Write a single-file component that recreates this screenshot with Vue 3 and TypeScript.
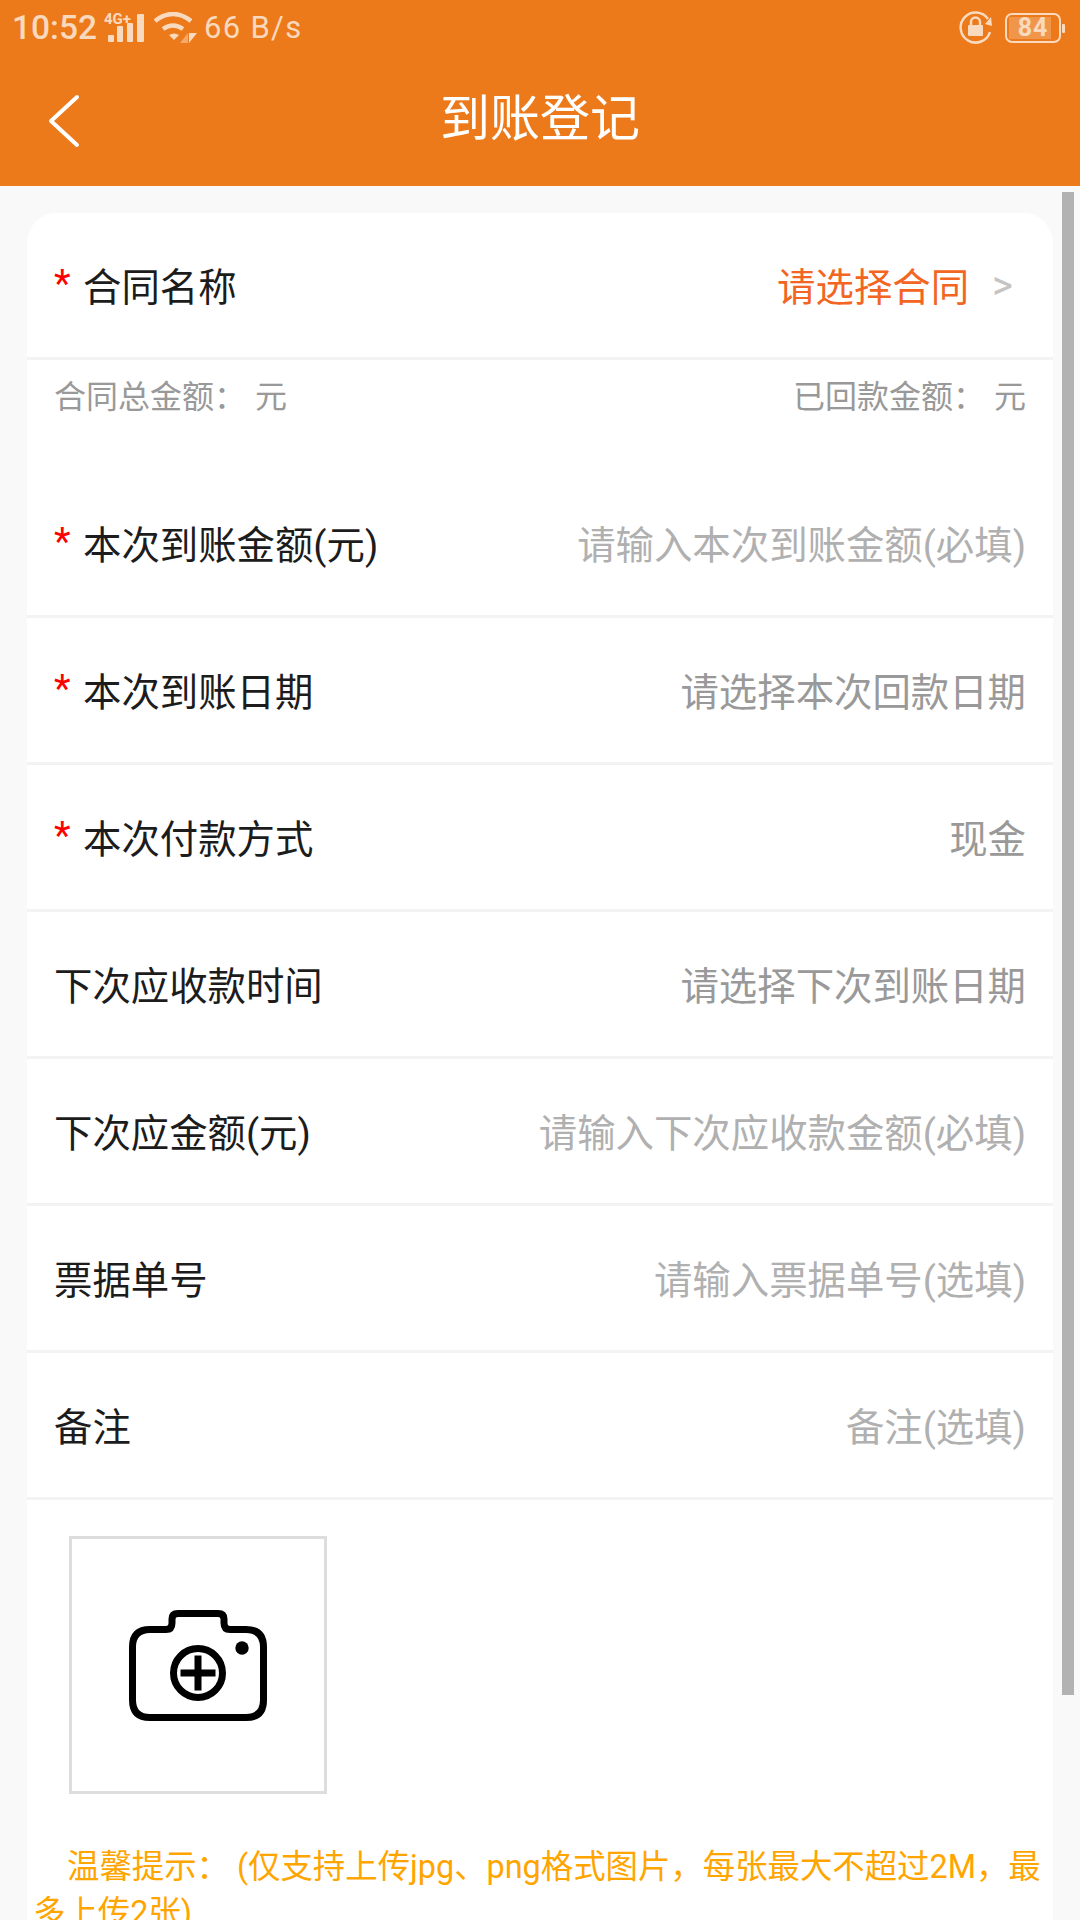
<script setup lang="ts">
interface Row { label: string; value: string; required?: boolean; kind?: string }
const rows: Row[] = [
  { label: '本次到账金额(元)', value: '请输入本次到账金额(必填)', required: true, kind: 'light' },
  { label: '本次到账日期', value: '请选择本次回款日期', required: true },
  { label: '本次付款方式', value: '现金', required: true },
  { label: '下次应收款时间', value: '请选择下次到账日期' },
  { label: '下次应金额(元)', value: '请输入下次应收款金额(必填)', kind: 'light' },
  { label: '票据单号', value: '请输入票据单号(选填)', kind: 'light' },
  { label: '备注', value: '备注(选填)', kind: 'light' }
]
</script>

<template>
  <div class="page">
    <header class="top">
      <div class="status">
        <div class="status-left">
          <span class="time">10:52</span>
          <svg class="signal" width="41" height="31" viewBox="0 0 41 31">
            <text x="0" y="11" class="net">4G+</text>
            <rect x="4" y="22" width="6" height="7" rx="1" fill="#fff" />
            <rect x="13" y="13" width="6" height="16" rx="1" fill="#fff" />
            <rect x="23" y="10" width="6" height="19" rx="1" fill="#fff" />
            <rect x="33" y="1" width="7" height="28" rx="1" fill="#fff" />
          </svg>
          <svg class="wifi" width="44" height="32" viewBox="0 0 44 32">
            <path d="M1 9Q19 -5 37 9" fill="none" stroke="#fff" stroke-width="4.500" />
            <path d="M9 17Q19 10 29 17" fill="none" stroke="#fff" stroke-width="4.500" />
            <path d="M15 23Q20 20 25 23L20 28Z" fill="#fff" />
            <path d="M26 31L34 21V31Z" fill="#fff" opacity="0.5" />
            <path d="M35 21H43L35 31Z" fill="#fff" />
          </svg>
          <span class="speed">66 B/s</span>
        </div>
        <div class="status-right">
          <svg width="34" height="34" viewBox="0 0 34 34">
            <path d="M29 8A15 15 0 1 0 31 21" fill="none" stroke="#fff" stroke-width="2.500" />
            <path d="M26 13L32 6L33 15Z" fill="#fff" />
            <rect x="9" y="14" width="15" height="11" rx="1" fill="#fff" />
            <path d="M12 14V11A4.500 4.500 0 0 1 21 11V14" fill="none" stroke="#fff" stroke-width="2.500" />
          </svg>
          <div class="battery">
            <span class="battery-fill"></span>
            <span class="battery-num">84</span>
          </div>
          <span class="battery-tip"></span>
        </div>
      </div>
      <div class="nav">
        <svg class="back" width="32" height="56" viewBox="0 0 32 56">
          <path d="M29 4L3 28L29 52" fill="none" stroke="#fff" stroke-width="4" stroke-linecap="round" stroke-linejoin="round" />
        </svg>
        <h1 class="title">到账登记</h1>
      </div>
    </header>

    <main class="card">
      <div class="row">
        <div class="label"><span class="star">*</span>合同名称</div>
        <div class="pick">
          <span class="pick-text">请选择合同</span>
          <span class="chev">&gt;</span>
        </div>
      </div>
      <div class="summary">
        <span>合同总金额： 元</span>
        <span>已回款金额： 元</span>
      </div>
      <div v-for="r in rows" :key="r.label" class="row">
        <div class="label"><span v-if="r.required" class="star">*</span>{{ r.label }}</div>
        <div class="value" :class="{ light: r.kind === 'light' }">{{ r.value }}</div>
      </div>
      <div class="upload">
        <svg width="138" height="111" viewBox="0 0 138 111">
          <path d="M3.500 37Q3.500 19.500 21 19.500H37Q43 19.500 43 13V9Q43 3.500 49 3.500H89Q95 3.500 95 9V13Q95 19.500 101 19.500H117Q134.500 19.500 134.500 37V90Q134.500 107.500 117 107.500H21Q3.500 107.500 3.500 90Z" fill="none" stroke="#000" stroke-width="7" stroke-linejoin="round" />
          <circle cx="69" cy="63" r="24.500" fill="none" stroke="#000" stroke-width="7" />
          <path d="M69 45.500V80.500M51.500 63H86.500" stroke="#000" stroke-width="7" />
          <circle cx="113" cy="38" r="6.700" fill="#000" />
        </svg>
      </div>
      <p class="tip">温馨提示： (仅支持上传jpg、png格式图片，每张最大不超过2M，最多上传2张)</p>
    </main>
    <div class="scrollbar"></div>
  </div>
</template>

<style scoped>
.page {
  position: relative;
  width: 1080px;
  height: 1920px;
  overflow: hidden;
  background: #f9f9f9;
  font-family: Roboto, "Noto Sans CJK SC", sans-serif;
}
.top {
  height: 186px;
  background: #ec7a1a;
  color: #fff;
}
.status {
  height: 56px;
  display: flex;
  justify-content: space-between;
  align-items: center;
  padding: 0 15px 0 12px;
}
.status-left {
  display: flex;
  align-items: center;
  color: rgba(255, 255, 255, 0.72);
}
.time {
  font-size: 33.500px;
  font-weight: 500;
  line-height: 56px;
}
.signal {
  margin-left: 7px;
  opacity: 0.72;
  overflow: visible;
}
.net {
  font-size: 15px;
  font-weight: 700;
  fill: #fff;
  font-family: Roboto, sans-serif;
}
.wifi {
  margin-left: 9px;
  opacity: 0.72;
}
.speed {
  margin-left: 6px;
  font-size: 31px;
  letter-spacing: 1.300px;
  line-height: 56px;
}
.status-right {
  display: flex;
  align-items: center;
  opacity: 0.72;
}
.battery {
  position: relative;
  width: 56px;
  height: 30px;
  margin-left: 12px;
  border: 2px solid #fff;
  border-radius: 7px;
  box-sizing: border-box;
  display: flex;
  align-items: center;
  justify-content: center;
}
.battery-fill {
  position: absolute;
  left: 2px;
  top: 2px;
  bottom: 2px;
  width: 42px;
  background: rgba(255, 255, 255, 0.3);
}
.battery-num {
  position: relative;
  font-size: 25px;
  font-weight: 700;
  line-height: 26px;
  letter-spacing: 1px;
}
.battery-tip {
  width: 3px;
  height: 9px;
  margin-left: 1px;
  background: #fff;
  border-radius: 1px;
}
.nav {
  position: relative;
  height: 130px;
  display: flex;
  align-items: center;
  justify-content: center;
}
.back {
  position: absolute;
  left: 48px;
  top: 37px;
}
.title {
  margin: 0 0 14px;
  font-size: 50px;
  font-weight: 400;
}
.card {
  position: relative;
  width: 1026px;
  margin: 27px 0 0 27px;
  background: #fff;
  border-radius: 30px 30px 0 0;
}
.row {
  height: 147px;
  box-sizing: border-box;
  padding: 0 27px 3px;
  border-bottom: 3px solid #f3f3f3;
  display: flex;
  align-items: center;
  justify-content: space-between;
  font-size: 38.400px;
}
.label {
  color: #1c1c1c;
  display: flex;
  align-items: center;
  white-space: nowrap;
}
.star {
  width: 29px;
  color: #f00;
}
.value {
  color: #999;
  white-space: nowrap;
}
.value.light {
  color: #b0b0b0;
}
.pick {
  display: flex;
  align-items: center;
}
.pick-text {
  color: #f26522;
}
.chev {
  margin-left: 23px;
  margin-right: 13px;
  padding-top: 4px;
  color: #c4c4c4;
  font-size: 40px;
}
.summary {
  height: 111px;
  box-sizing: border-box;
  padding: 14px 27px 0;
  display: flex;
  justify-content: space-between;
  font-size: 32px;
  line-height: 46px;
  word-spacing: 1px;
  color: #999;
}
.upload {
  width: 258px;
  height: 258px;
  box-sizing: border-box;
  margin: 36px 0 0 42px;
  border: 3px solid #ddd;
  display: flex;
  align-items: center;
  justify-content: center;
}
.tip {
  margin: 50px 0 0;
  padding: 0 6px;
  text-indent: 34px;
  font-size: 32.400px;
  line-height: 46px;
  color: #ffa500;
}
.scrollbar {
  position: absolute;
  left: 1062px;
  top: 192px;
  width: 12px;
  height: 1503px;
  background: #b2b2b2;
}
</style>
